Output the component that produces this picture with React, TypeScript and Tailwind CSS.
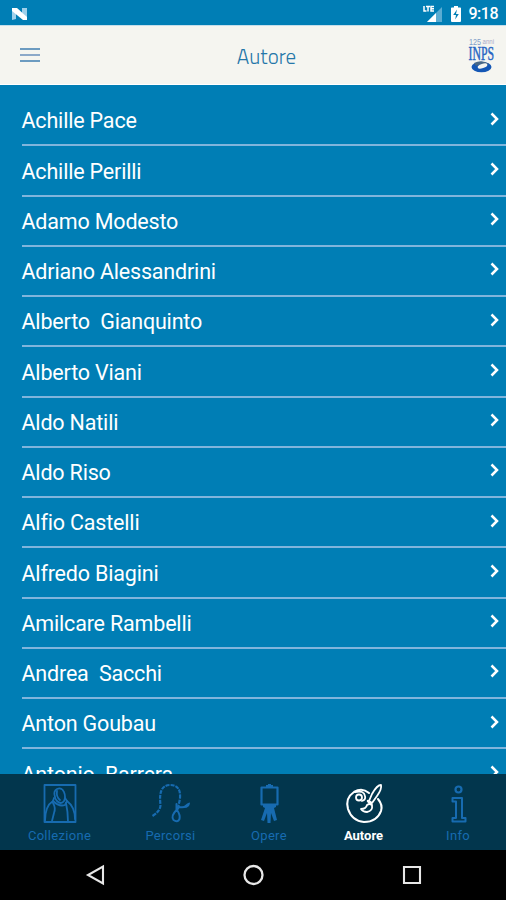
import type { ReactNode } from "react";

const authors = [
  "Achille Pace",
  "Achille Perilli",
  "Adamo Modesto",
  "Adriano Alessandrini",
  "Alberto  Gianquinto",
  "Alberto Viani",
  "Aldo Natili",
  "Aldo Riso",
  "Alfio Castelli",
  "Alfredo Biagini",
  "Amilcare Rambelli",
  "Andrea  Sacchi",
  "Anton Goubau",
  "Antonio  Barrera",
];

function StatusBar() {
  return (
    <div className="flex h-[25px] shrink-0 items-center bg-[#007eb5] pr-2 pl-[11px] text-white">
      <svg width="17" height="14" viewBox="0 0 17 14" className="mt-[2px]">
        <path d="M1 2l4 3v7l-4 1zM11 1h5v10l-5-5z" fill="#9fd0ea" />
        <path d="M1 1h5l10 9v3h-4L1 4z" fill="#fff" />
      </svg>
      <div className="ml-auto flex items-center">
        <svg width="20" height="18" viewBox="0 0 20 18" className="mt-[3px]">
          <path d="M19 2v15H4z" fill="#5bacd2" />
          <path d="M13 8v9H4z" fill="#fff" />
          <path d="M1 1v5h2.500M3 1.500h4M5 1.500v5M11 1.500H8V6h3M8 3.800h3" fill="none" stroke="#fff" strokeWidth="1.500" />
        </svg>
        <svg width="10" height="16" viewBox="0 0 10 16" className="mt-[2px] ml-[8px]">
          <path d="M3 0h4v1.500h2.200q.8 0 .8.800V15q0 1-1 1H1q-1 0-1-1V2.300q0-.8.800-.8H3z" fill="#fff" />
          <path d="M6 3.500L2.200 9H5l-.8 4.500L7.800 8H5z" fill="#007eb5" />
        </svg>
        <span className="mt-[3px] ml-[8px] text-[16px] leading-none font-medium tracking-[-0.500px]">9:18</span>
      </div>
    </div>
  );
}

function Header() {
  return (
    <header className="grid h-[60px] shrink-0 grid-cols-[1fr_auto_1fr] items-center border-y border-t-[#c4deeb] border-b-white bg-[#f5f5f0] pr-[11px] pl-5">
      <button className="flex w-5 flex-col gap-1">
        <span className="h-[2px] bg-[#6c9bc0]" />
        <span className="h-[2px] bg-[#8ca9c9]" />
        <span className="h-[2px] bg-[#6c9bc0]" />
      </button>
      <h1 className="mt-[3px] ml-[18px] font-['Titillium_Web','Noto_Sans',sans-serif] text-[21px] font-light text-[#2477a9]">Autore</h1>
      <svg width="27" height="37" viewBox="0 0 27 37" overflow="visible" className="justify-self-end">
        <text x="1" y="8" fontSize="9" fontFamily="Liberation Sans, sans-serif" fill="#7e9dc8" textLength="12" lengthAdjust="spacingAndGlyphs">125</text>
        <text x="14.500" y="7" fontSize="7.500" fontFamily="Liberation Sans, sans-serif" fill="#a9abc8" textLength="11.500" lengthAdjust="spacingAndGlyphs">anni</text>
        <text x="0.500" y="23" fontSize="19" fontFamily="Liberation Serif, serif" fill="#2866c4" stroke="#2866c4" strokeWidth=".5" textLength="25.500" lengthAdjust="spacingAndGlyphs">INPS</text>
        <ellipse cx="13.500" cy="30" rx="10" ry="5.200" fill="#1457b5" />
        <path d="M6 26q8-4 15 1l-2 1q-6-2-11 1z" fill="#486887" />
        <ellipse cx="14.500" cy="29" rx="5" ry="2.200" fill="#f5f5f0" transform="rotate(-18 14.500 29)" />
      </svg>
    </header>
  );
}

function AuthorRow({ name }: { name: string }) {
  return (
    <li className="ml-[21.500px] flex h-[50.250px] items-center border-b-2 border-[#80b5dc] pr-[7px]">
      <span className="mt-[2px] text-[21.500px] leading-none tracking-[-0.180px] whitespace-pre">{name}</span>
      <svg width="9" height="14" viewBox="0 0 9 14" className="mb-[3px] ml-auto" fill="none" stroke="#fff" strokeWidth="2.500">
        <path d="M1.500 1.500L7 7l-5.500 5.500" />
      </svg>
    </li>
  );
}

function Tab({ label, width, active = false, children }: { label: string; width: string; active?: boolean; children: ReactNode }) {
  return (
    <button className={`flex flex-col items-center pt-[9px] ${width} ${active ? "text-white" : "text-[#176bb0]"}`}>
      <svg width="42" height="42" viewBox="0 0 42 42" fill="none" stroke="currentColor" strokeWidth="1.800" strokeLinecap="round" strokeLinejoin="round">
        {children}
      </svg>
      <span className={`mt-[4px] text-[13px] leading-[14px] ${active ? "font-bold" : "tracking-[0.300px]"}`}>{label}</span>
    </button>
  );
}

function TabBar() {
  return (
    <nav className="flex h-[76px] shrink-0 bg-[#02364d]">
      <Tab label="Collezione" width="w-[119px]">
        <path d="M5.500 2h31v37h-31z" />
        {/* portrait: head, collar, then shoulders and sleeves */}
        <path d="M16 14q-2-6 2-8 5-2 7 3 2 5 0 9-3 4-7 0-2-2-2-4z" />
        <path d="M18 8q-1 6 3 9M15 15l-1 3q6 6 12 4l2-4-2-3" />
        <path d="M14 18q-8 5-8 20M14 20q3 5 1 10l-2 8M27 20q2 9 2 19M28 18q8 6 8 18" />
      </Tab>
      <Tab label="Percorsi" width="w-[103px]">
        <path d="M2.500 33q8-5 8-11Q8 2 20 2q11 0 10 13-1 7-3 12" strokeDasharray="4 1" strokeLinecap="butt" strokeWidth="2.200" />
        <path d="M26.500 21v6q-6 6-3 10 4 3 6-1 1-4-2.500-9l2-3q5 1 7-1" strokeWidth="2" />
        <path d="M34 24q2-4 6-4.500 0 4-4 5.500z" fill="currentColor" stroke="none" />
      </Tab>
      <Tab label="Opere" width="w-[94px]">
        <path d="M13.500 4.500h16v17h-16z" strokeWidth="2.200" />
        <path d="M18 5V2h2V1h3v1h2v3zM15 21h13v3l-2 1 3 12-3 1-3-8-.5 10h-3L19 30l-3 8-3-1 4-12-2-1z" fill="currentColor" stroke="none" />
      </Tab>
      <Tab label="Autore" width="w-[95px]" active>
        <path d="M26 10Q19 4 11 9 2 15 5 26q4 12 16 13 13 0 17-11 2-6-3-12" strokeWidth="2.100" />
        <circle cx="16" cy="14.500" r="3" />
        <path d="M12 9q9-2 10 4 1 4-3 5" />
        <path d="M26 18l3-7q5-9 9-9 1 4-4 11l-5 7zM24 22q3-2 5 0 1 6-5 7-4 0-6-3 5 0 6-4z" />
        <path d="M25 18l3 3" strokeWidth="2.500" />
      </Tab>
      <Tab label="Info" width="w-[94px]">
        <circle cx="21.500" cy="6.500" r="3" strokeWidth="2.200" />
        <path d="M15.500 15H25v20h3.500v3.500h-13V35H19V18.500h-3.500z" strokeWidth="2" />
      </Tab>
    </nav>
  );
}

function AndroidNav() {
  return (
    <div className="flex h-[50px] shrink-0 items-center justify-between bg-black pr-[84px] pl-[85px]">
      <svg width="21" height="22" viewBox="0 0 21 22" fill="none" stroke="#e7e7e7" strokeWidth="2.100">
        <path d="M18 2.500v17L3 11z" />
      </svg>
      <svg width="22" height="22" viewBox="0 0 22 22" fill="none" stroke="#e7e7e7" strokeWidth="2.300">
        <circle cx="10.500" cy="11" r="9" />
      </svg>
      <svg width="20" height="20" viewBox="0 0 20 20" fill="none" stroke="#e7e7e7" strokeWidth="2.100">
        <path d="M2 2h16v16H2z" />
      </svg>
    </div>
  );
}

export default function App() {
  return (
    <div className="flex h-[900px] w-[506px] flex-col overflow-hidden bg-[#007eb5] font-[Roboto,sans-serif] text-white">
      <StatusBar />
      <Header />
      <ul className="min-h-0 flex-1 overflow-hidden pt-[11px]">
        {authors.map((name) => (
          <AuthorRow key={name} name={name} />
        ))}
      </ul>
      <TabBar />
      <AndroidNav />
    </div>
  );
}
